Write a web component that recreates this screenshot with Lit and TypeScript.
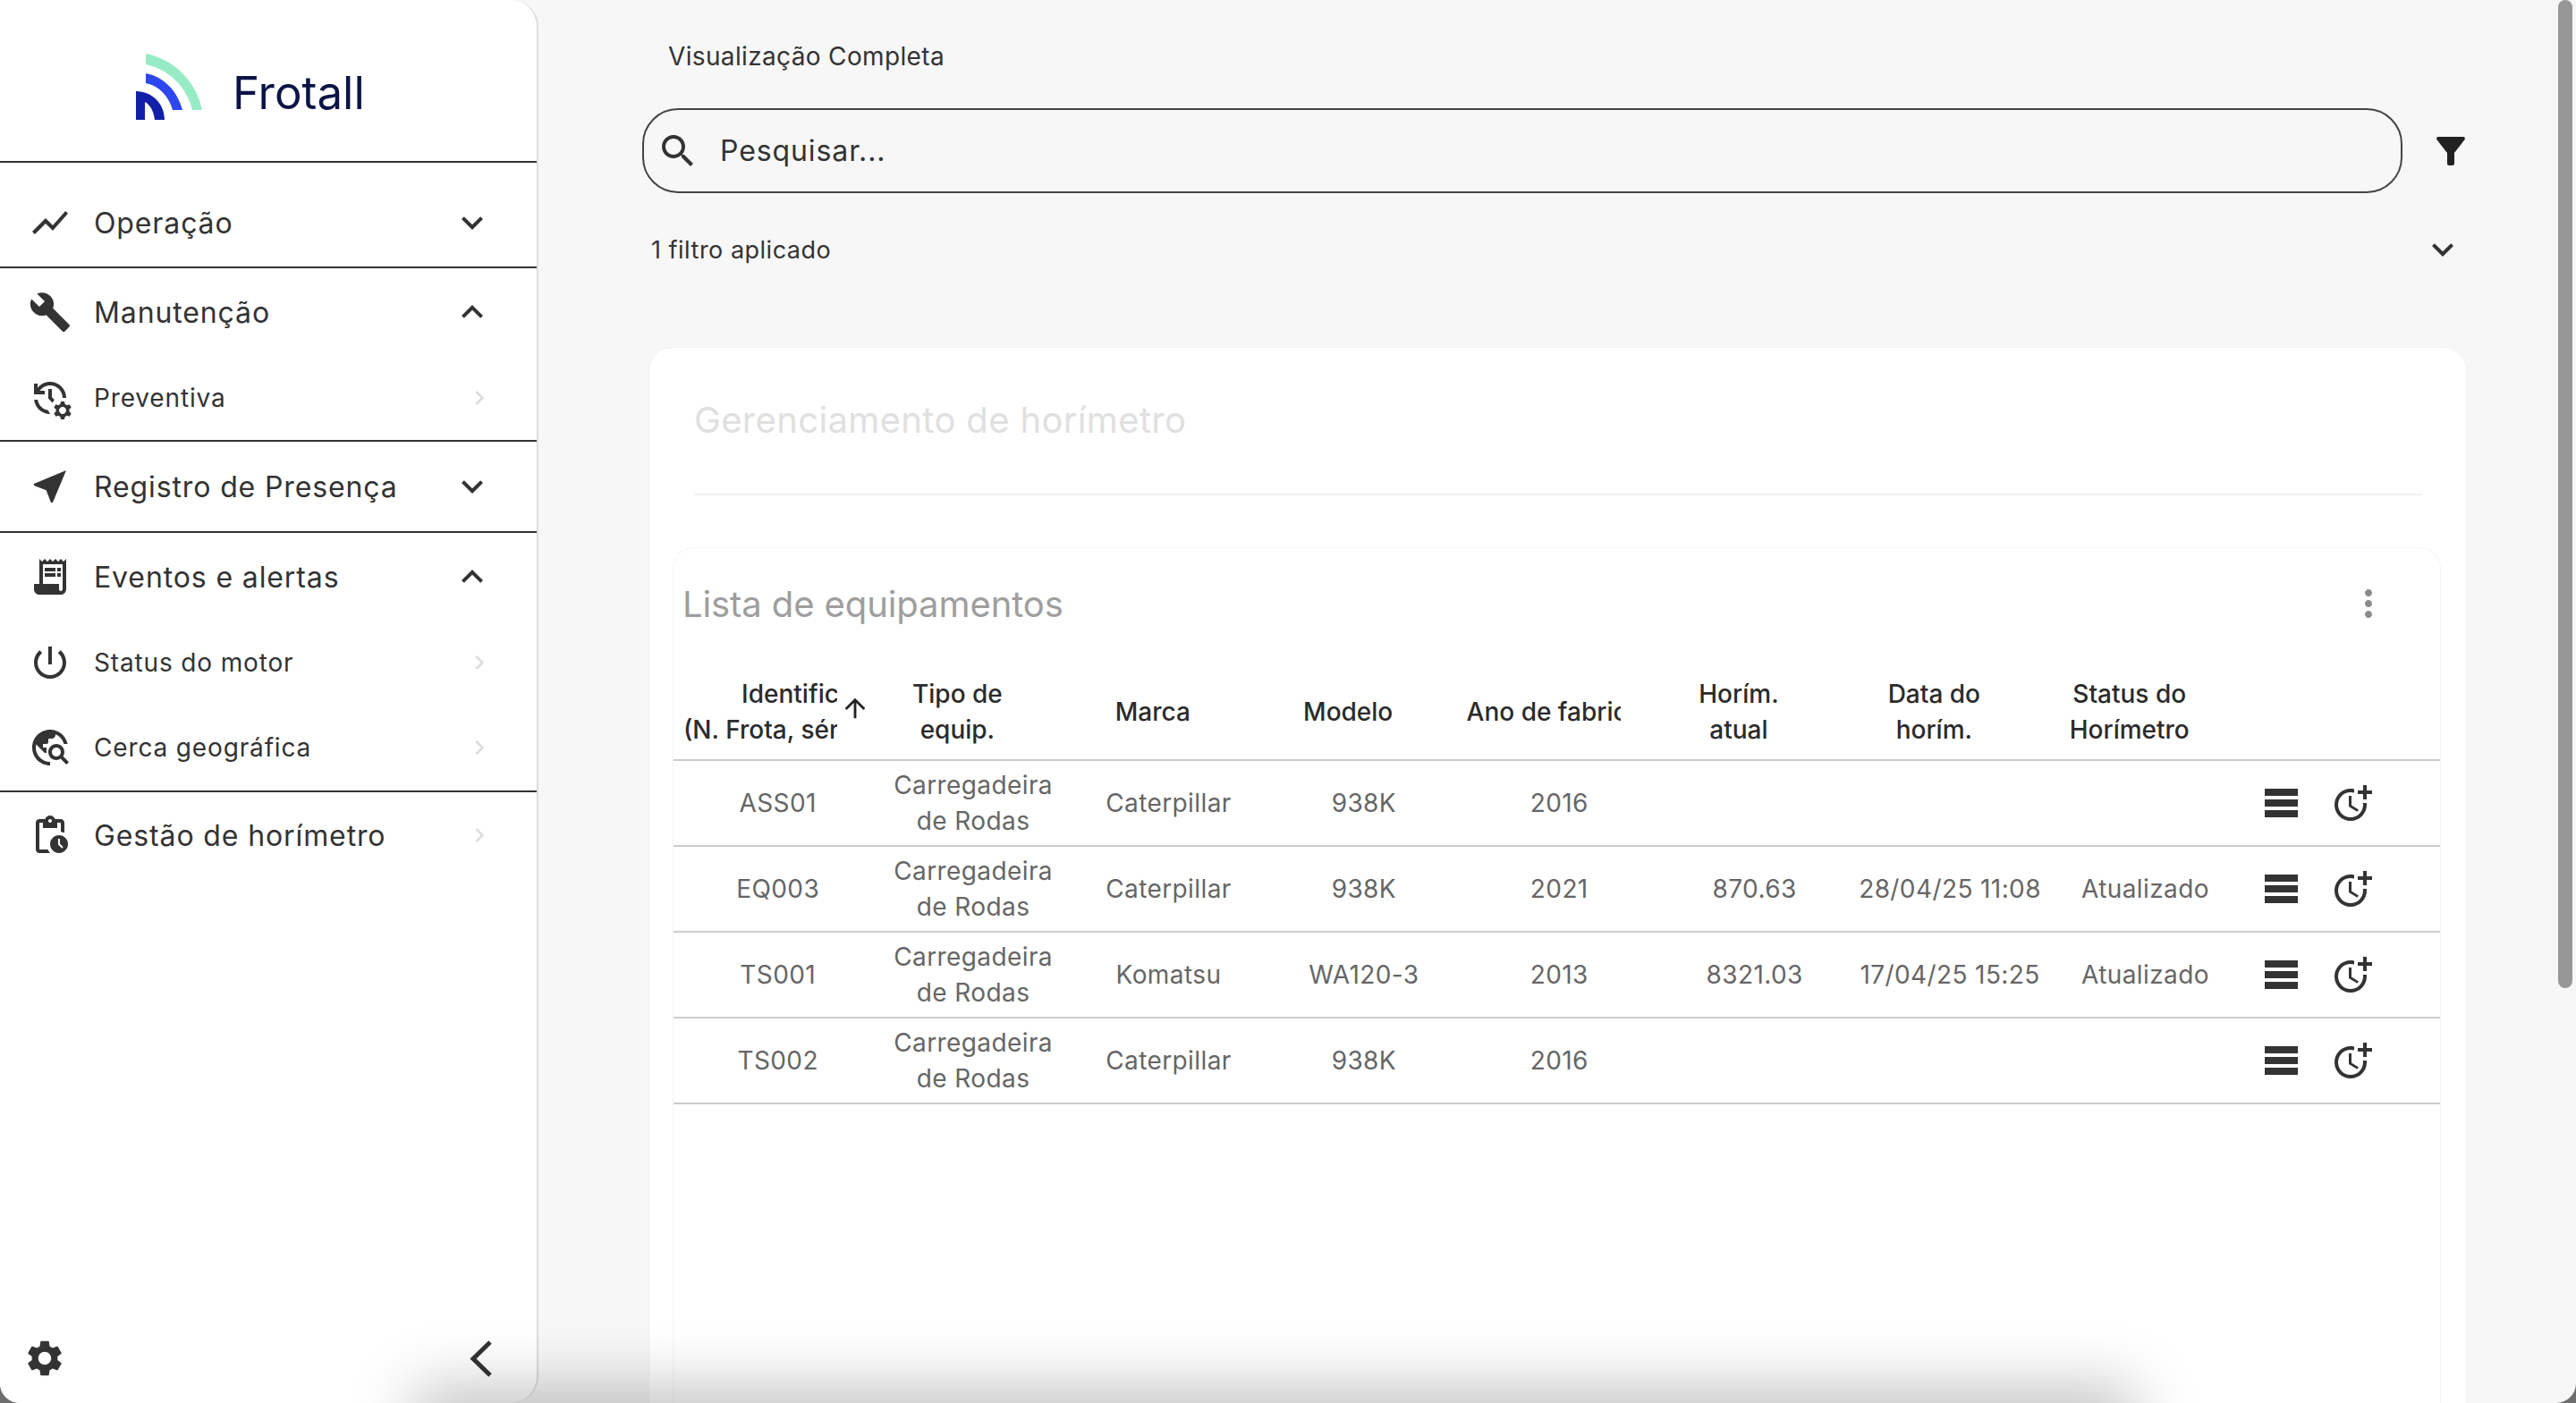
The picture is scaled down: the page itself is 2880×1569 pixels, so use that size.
import { LitElement, html, css } from 'lit';
import { customElement } from 'lit/decorators.js';

const P = {
  chart: 'M3.5 18.49l6-6.01 4 4L22 6.92l-1.41-1.41-7.09 7.97-4-4L2 16.99z',
  build: 'M22.7 19l-9.1-9.1c.9-2.3.4-5-1.5-6.9-2-2-5-2.4-7.4-1.3L9 6 6 9 1.6 4.7C.4 7.1.9 10.1 2.9 12.1c1.9 1.9 4.6 2.4 6.9 1.5l9.1 9.1c.4.4 1 .4 1.4 0l2.3-2.3c.5-.4.5-1.1.1-1.4z',
  history: 'M22.69 18.37l1.14-1-1-1.73-1.45.49c-.32-.27-.68-.48-1.08-.63L20 14h-2l-.3 1.49c-.4.15-.76.36-1.08.63l-1.45-.49-1 1.73 1.14 1c-.08.5-.08.76 0 1.26l-1.14 1 1 1.73 1.45-.49c.32.27.68.48 1.08.63L18 24h2l.3-1.49c.4-.15.76-.36 1.08-.63l1.45.49 1-1.73-1.14-1c.08-.51.08-.77 0-1.27zM19 21c-1.1 0-2-.9-2-2s.9-2 2-2 2 .9 2 2-.9 2-2 2zM11 7v5.41l2.36 2.36 1.04-1.79-1.4-1.39V7h-2zm10 5c0-4.97-4.03-9-9-9-2.83 0-5.35 1.32-7 3.36V4H3v6h6V8H6.26C7.53 6.19 9.63 5 12 5c3.86 0 7 3.14 7 7h2zm-10.14 6.91c-2.99-.49-5.35-2.9-5.78-5.91H3.06c.5 4.5 4.31 8 8.94 8h.07l-1.21-2.09z',
  near: 'M21 3L3 10.53v.98l6.84 2.65L12.48 21h.98L21 3z',
  receipt: 'M19.5 3.5L18 2l-1.5 1.5L15 2l-1.5 1.5L12 2l-1.5 1.5L9 2 7.5 3.5 6 2v14H3v3c0 1.66 1.34 3 3 3h12c1.66 0 3-1.34 3-3V2l-1.5 1.5zM19 19c0 .55-.45 1-1 1s-1-.45-1-1v-3H8V5h11v14zM9 7h6v2H9zM16 7h2v2h-2zM9 10h6v2H9zM16 10h2v2h-2z',
  power: 'M13 3h-2v10h2V3zm4.83 2.17l-1.42 1.42C17.99 7.86 19 9.81 19 12c0 3.87-3.13 7-7 7s-7-3.13-7-7c0-2.19 1.01-4.14 2.58-5.42L6.17 5.17C4.23 6.82 3 9.26 3 12c0 4.97 4.03 9 9 9s9-4.03 9-9c0-2.74-1.23-5.18-3.17-6.83z',
  explore: 'M19.3 16.9c.4-.7.7-1.5.7-2.4 0-2.5-2-4.5-4.5-4.5S11 12 11 14.5s2 4.5 4.5 4.5c.9 0 1.7-.3 2.4-.7l3.2 3.2 1.4-1.4-3.2-3.2zm-3.8.1c-1.4 0-2.5-1.1-2.5-2.5s1.1-2.5 2.5-2.5 2.5 1.1 2.5 2.5-1.1 2.5-2.5 2.5zM12 20v2C6.48 22 2 17.52 2 12S6.48 2 12 2c4.84 0 8.87 3.44 9.8 8h-2.07c-.64-2.46-2.4-4.47-4.73-5.41V5c0 1.1-.9 2-2 2h-2v2c0 .55-.45 1-1 1H8v2h2v3H9l-4.79-4.79C4.08 10.79 4 11.38 4 12c0 4.41 3.59 8 8 8z',
  pending: 'M17 12c-2.76 0-5 2.24-5 5s2.24 5 5 5 5-2.24 5-5-2.24-5-5-5zm1.65 7.35L16.5 17.2V14h1v2.79l1.85 1.85-.7.71zM18 3h-3.18C14.4 1.84 13.3 1 12 1s-2.4.84-2.82 2H6c-1.1 0-2 .9-2 2v15c0 1.1.9 2 2 2h6.11c-.59-.57-1.07-1.25-1.42-2H6V5h2v3h8V5h2v5.08c.71.1 1.38.31 2 .6V5c0-1.1-.9-2-2-2zm-6 2c-.55 0-1-.45-1-1s.45-1 1-1 1 .45 1 1-.45 1-1 1z',
  settings: 'M19.14 12.94c.04-.3.06-.61.06-.94 0-.32-.02-.64-.07-.94l2.03-1.58c.18-.14.23-.41.12-.61l-1.92-3.32c-.12-.22-.37-.29-.59-.22l-2.39.96c-.5-.38-1.03-.7-1.62-.94l-.36-2.54c-.04-.24-.24-.41-.48-.41h-3.84c-.24 0-.43.17-.47.41l-.36 2.54c-.59.24-1.13.57-1.62.94l-2.39-.96c-.22-.08-.47 0-.59.22L2.74 8.87c-.12.21-.08.47.12.61l2.03 1.58c-.05.3-.09.63-.09.94s.02.64.07.94l-2.03 1.58c-.18.14-.23.41-.12.61l1.92 3.32c.12.22.37.29.59.22l2.39-.96c.5.38 1.03.7 1.62.94l.36 2.54c.05.24.24.41.48.41h3.84c.24 0 .44-.17.47-.41l.36-2.54c.59-.24 1.13-.56 1.62-.94l2.39.96c.22.08.47 0 .59-.22l1.92-3.32c.12-.22.07-.47-.12-.61l-2.01-1.58zM12 15.6c-1.98 0-3.6-1.62-3.6-3.6s1.62-3.6 3.6-3.6 3.6 1.62 3.6 3.6-1.62 3.6-3.6 3.6z',
  moreTime: 'M10 8v6l4.7 2.9.8-1.2-4-2.4V8zM17.92 12c.05.33.08.66.08 1 0 3.9-3.1 7-7 7s-7-3.1-7-7 3.1-7 7-7c.7 0 1.37.1 2 .29V4.23C12.36 4.08 11.69 4 11 4c-5 0-9 4-9 9s4 9 9 9 9-4 9-9c0-.34-.02-.67-.06-1h-2.02zM20 5V2h-2v3h-3v2h3v3h2V7h3V5z',
  filter: 'M4.25 5.61C6.27 8.2 10 13 10 13v6c0 .55.45 1 1 1h2c.55 0 1-.45 1-1v-6s3.72-4.8 5.74-7.39c.51-.66.04-1.61-.79-1.61H5.04c-.83 0-1.3.95-.79 1.61z',
  search: 'M15.5 14h-.79l-.28-.27C15.41 12.59 16 11.11 16 9.5 16 5.91 13.09 3 9.5 3S3 5.91 3 9.5 5.91 16 9.5 16c1.61 0 3.09-.59 4.23-1.57l.27.28v.79l5 4.99L20.49 19l-4.99-5zm-6 0C7.01 14 5 11.99 5 9.5S7.01 5 9.5 5 14 7.01 14 9.5 11.99 14 9.5 14z',
  down: 'M16.59 8.59L12 13.17 7.41 8.59 6 10l6 6 6-6z',
  up: 'M12 8l-6 6 1.41 1.41L12 10.83l4.59 4.58L18 14z',
  right: 'M10 6L8.59 7.41 13.17 12l-4.58 4.59L10 18l6-6z',
  vert: 'M12 8c1.1 0 2-.9 2-2s-.9-2-2-2-2 .9-2 2 .9 2 2 2zm0 2c-1.1 0-2 .9-2 2s.9 2 2 2 2-.9 2-2-.9-2-2-2zm0 6c-1.1 0-2 .9-2 2s.9 2 2 2 2-.9 2-2-.9-2-2-2z',
  arrowUp: 'M4 12l1.41 1.41L11 7.83V20h2V7.83l5.58 5.59L20 12l-8-8-8 8z',
};

const icon = (d: string, cls = '') => html`<svg class="icon ${cls}" viewBox="0 0 24 24"><path d=${d}></path></svg>`;

type NavItem = { label: string; icon: string; h: number; sub?: boolean; arrow: 'down' | 'up' | 'right'; end?: boolean };

const NAV: NavItem[] = [
  { label: 'Operação', icon: P.chart, h: 100, arrow: 'down', end: true },
  { label: 'Manutenção', icon: P.build, h: 98, arrow: 'up' },
  { label: 'Preventiva', icon: P.history, h: 96, sub: true, arrow: 'right', end: true },
  { label: 'Registro de Presença', icon: P.near, h: 102, arrow: 'down', end: true },
  { label: 'Eventos e alertas', icon: P.receipt, h: 98, arrow: 'up' },
  { label: 'Status do motor', icon: P.power, h: 94, sub: true, arrow: 'right' },
  { label: 'Cerca geográfica', icon: P.explore, h: 98, sub: true, arrow: 'right', end: true },
  { label: 'Gestão de horímetro', icon: P.pending, h: 96, arrow: 'right' },
];

const COLUMNS = [
  html`Identificação<br />(N. Frota, série/chassi)`,
  html`Tipo de<br />equip.`,
  html`Marca`,
  html`Modelo`,
  html`Ano de fabricação`,
  html`Horím.<br />atual`,
  html`Data do<br />horím.`,
  html`Status do<br />Horímetro`,
];

const TIPO = html`Carregadeira<br />de Rodas`;

const ROWS = [
  ['ASS01', TIPO, 'Caterpillar', '938K', '2016', '', '', ''],
  ['EQ003', TIPO, 'Caterpillar', '938K', '2021', '870.63', '28/04/25 11:08', 'Atualizado'],
  ['TS001', TIPO, 'Komatsu', 'WA120-3', '2013', '8321.03', '17/04/25 15:25', 'Atualizado'],
  ['TS002', TIPO, 'Caterpillar', '938K', '2016', '', '', ''],
];

@customElement('app-root')
export class AppRoot extends LitElement {
  static styles = css`
    :host {
      display: block;
      height: 100vh;
      background: #6e6e6e;
      font-family: 'Inter', 'Liberation Sans', sans-serif;
      color: #333;
    }
    .frame {
      position: relative;
      display: flex;
      height: 100%;
      overflow: hidden;
      background: #f7f7f7;
      border-radius: 0 0 22px 22px;
    }
    .icon {
      display: block;
      flex: none;
      width: 48px;
      height: 48px;
      fill: #333;
    }

    /* sidebar */
    .sidebar {
      flex: none;
      display: flex;
      flex-direction: column;
      box-sizing: content-box;
      width: 600px;
      background: #fff;
      border-right: 2px solid #dcdcdc;
      border-radius: 0 30px 30px 0;
    }
    .brand {
      display: flex;
      gap: 30px;
      height: 122px;
      padding: 58px 0 0 150px;
      border-bottom: 2px solid #333;
      margin-bottom: 18px;
    }
    .brand svg {
      flex: none;
      width: 80px;
      height: 80px;
    }
    .brand-name {
      margin-top: 16px;
      font-size: 51px;
      line-height: 60px;
      color: #0b1445;
    }
    .nav-item {
      display: flex;
      align-items: center;
      padding-left: 32px;
      box-sizing: border-box;
      font-size: 32px;
      letter-spacing: 0.88px;
    }
    .nav-item.sub {
      font-size: 28px;
      letter-spacing: 0.85px;
    }
    .nav-item.end {
      border-bottom: 2px solid #333;
    }
    .nav-item span {
      flex: 1;
      margin-left: 25px;
    }
    .nav-item .arrow {
      margin-right: 48px;
    }
    .nav-item .arrow.right {
      width: 32px;
      height: 32px;
      fill: #ddd;
    }
    .side-foot {
      margin-top: auto;
      display: flex;
      align-items: center;
      justify-content: space-between;
      padding: 0 50px 26px 26px;
    }
    .back {
      display: block;
      width: 25px;
      height: 41px;
      fill: none;
      stroke: #333;
      stroke-width: 5;
    }

    /* main */
    .main {
      flex: 1;
      min-width: 0;
      padding: 43px 122px 0 116px;
    }
    .crumb {
      padding-left: 29px;
      font-size: 28px;
      line-height: 40px;
      letter-spacing: 0.35px;
    }
    .search-row {
      display: flex;
      align-items: center;
      gap: 30px;
      margin-top: 38px;
    }
    .search {
      flex: none;
      display: flex;
      align-items: center;
      box-sizing: border-box;
      width: 1968px;
      height: 95px;
      padding-left: 14px;
      border: 2px solid #444;
      border-radius: 40px;
      font-size: 32px;
      letter-spacing: 0.9px;
    }
    .search span {
      margin-left: 23px;
    }
    .filter-btn {
      fill: #212121;
    }
    .filter-row {
      display: flex;
      align-items: center;
      justify-content: space-between;
      height: 48px;
      margin-top: 39px;
      padding: 0 3px 0 10px;
      font-size: 27px;
      letter-spacing: 0.5px;
    }
    .card {
      height: 1400px;
      margin: 85px 0 0 7px;
      box-sizing: border-box;
      padding: 0 28px 0 26px;
      background: #fff;
      border: 1px solid #f2f2f2;
      border-radius: 26px;
    }
    .card-head {
      margin: 0 22px 58px 24px;
      height: 165px;
      box-sizing: border-box;
      padding-top: 57px;
      border-bottom: 2px solid #f0f0f0;
      font-size: 40px;
      line-height: 48px;
      letter-spacing: 0.35px;
      color: #e0e0e0;
    }
    .panel {
      height: 1200px;
      border: 1px solid #f4f4f4;
      border-bottom: none;
      border-radius: 24px 24px 0 0;
    }
    .panel-head {
      display: flex;
      align-items: center;
      justify-content: space-between;
      height: 130px;
      box-sizing: border-box;
      padding: 0 56px 6px 10px;
      font-size: 40px;
      letter-spacing: -0.1px;
      color: #9e9e9e;
    }
    .panel-head .icon {
      fill: #8a8a8a;
    }

    /* table */
    .tr {
      display: grid;
      grid-template-columns: repeat(8, 218.4px) 1fr;
      padding-left: 7px;
      border-bottom: 2px solid #ccc;
      align-items: center;
      box-sizing: border-box;
    }
    .tr.head {
      height: 108px;
      font-size: 28px;
      line-height: 40px;
      font-weight: 500;
      color: #2b2b2b;
    }
    .tr.body {
      height: 96px;
      font-size: 28px;
      line-height: 40px;
      color: #666;
      letter-spacing: 0.4px;
    }
    .th {
      display: flex;
      align-items: center;
      padding-left: 6px;
    }
    .th:first-child {
      padding-left: 4px;
    }
    .th-title {
      width: 172px;
      flex: none;
      overflow: hidden;
      white-space: nowrap;
      text-align: center;
    }
    .th-title span {
      display: inline-block;
    }
    .sort {
      width: 34px;
      height: 34px;
      margin: -8px 0 0 3px;
      fill: #222;
    }
    .td {
      padding-left: 1px;
      text-align: center;
    }
    .actions {
      display: flex;
      align-items: center;
      gap: 37px;
      padding-left: 25px;
    }
    .bars {
      display: flex;
      flex-direction: column;
      gap: 4px;
      width: 37px;
    }
    .bars i {
      display: block;
      height: 8px;
      background: #333;
    }

    /* overlays */
    .scrollbar {
      position: absolute;
      top: 0;
      right: 4px;
      width: 16px;
      height: 1105px;
      background: #979797;
      border-radius: 8px;
    }
    .dock-shadow {
      position: absolute;
      left: 480px;
      right: 510px;
      bottom: -50px;
      height: 50px;
      box-shadow: 0 0 70px 16px rgba(0, 0, 0, 0.25);
      pointer-events: none;
    }
  `;

  render() {
    return html`
      <div class="frame">
        <aside class="sidebar">
          <div class="brand">
            <svg viewBox="150 58 80 80">
              <path fill="#97ecc6" d="M163 60C195 66 220 92 226 123L215 123C209 98 190 78 163 72Z"></path>
              <path fill="#2e46f0" d="M163 82C184 86 199 103 204 123L193 123C189 108 178 96 163 93Z"></path>
              <path fill="#121fa8" d="M152 102C170 102 184 116 184 134L173 134C172 125 168 117 162 114L162 134L152 134Z"></path>
            </svg>
            <div class="brand-name">Frotall</div>
          </div>
          ${NAV.map(
            (n) => html`
              <div class="nav-item ${n.sub ? 'sub' : ''} ${n.end ? 'end' : ''}" style="height:${n.h}px">
                ${icon(n.icon)}
                <span>${n.label}</span>
                ${icon(n.arrow === 'down' ? P.down : n.arrow === 'up' ? P.up : P.right, `arrow ${n.arrow}`)}
              </div>
            `
          )}
          <div class="side-foot">
            ${icon(P.settings)}
            <svg class="back" viewBox="0 0 25 41"><path d="M23 2L4 20.5L23 39"></path></svg>
          </div>
        </aside>

        <main class="main">
          <div class="crumb">Visualização Completa</div>
          <div class="search-row">
            <div class="search">${icon(P.search)}<span>Pesquisar...</span></div>
            ${icon(P.filter, 'filter-btn')}
          </div>
          <div class="filter-row">
            <span>1 filtro aplicado</span>
            ${icon(P.down)}
          </div>
          <section class="card">
            <div class="card-head">Gerenciamento de horímetro</div>
            <div class="panel">
              <div class="panel-head">
                <span>Lista de equipamentos</span>
                ${icon(P.vert)}
              </div>
              <div class="tr head">
                ${COLUMNS.map(
                  (c, i) => html`
                    <div class="th">
                      <div class="th-title"><span>${c}</span></div>
                      ${i === 0 ? icon(P.arrowUp, 'sort') : ''}
                    </div>
                  `
                )}
                <div></div>
              </div>
              ${ROWS.map(
                (r) => html`
                  <div class="tr body">
                    ${r.map((v) => html`<div class="td">${v}</div>`)}
                    <div class="actions">
                      <div class="bars"><i></i><i></i><i></i></div>
                      ${icon(P.moreTime)}
                    </div>
                  </div>
                `
              )}
            </div>
          </section>
        </main>

        <div class="scrollbar"></div>
        <div class="dock-shadow"></div>
      </div>
    `;
  }
}
